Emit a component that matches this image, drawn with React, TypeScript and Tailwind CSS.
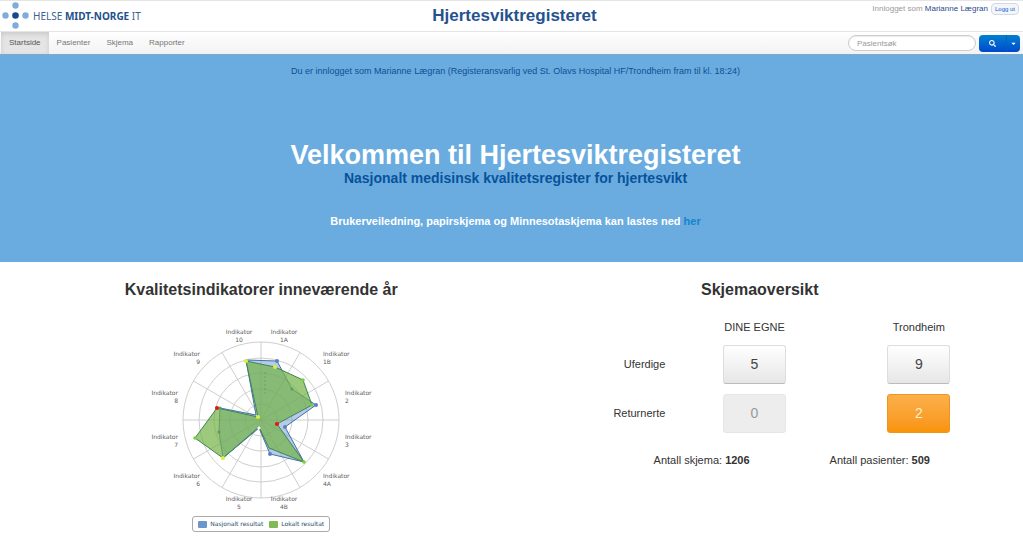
import { FaCaretDown, FaSearch } from "react-icons/fa";

type Point = [number, number];

const navItems = ["Startside", "Pasienter", "Skjema", "Rapporter"];

const rows = [
  { label: "Uferdige", own: 5, place: 9 },
  { label: "Returnerte", own: 0, place: 2, warn: true },
];

const national: Point[] = [
  [105, 38], [136, 39], [151, 67], [175, 83], [144, 105], [163, 140],
  [129, 132], [118, 106], [82, 136], [78, 110], [79, 86], [115, 93],
];

const local: Point[] = [
  [105, 39], [134, 45], [162, 58], [171, 83], [136, 102], [163, 140],
  [128, 126], [118, 105], [82, 136], [54, 116], [76, 86], [117, 95],
];

const chartLabels: { id: string; x: number; y: number; anchor: "start" | "middle" | "end" }[] = [
  { id: "1A", x: 143, y: 12, anchor: "middle" },
  { id: "1B", x: 182, y: 34, anchor: "start" },
  { id: "2", x: 204, y: 73, anchor: "start" },
  { id: "3", x: 204, y: 117, anchor: "start" },
  { id: "4A", x: 182, y: 156, anchor: "start" },
  { id: "4B", x: 143, y: 179, anchor: "middle" },
  { id: "5", x: 98, y: 179, anchor: "middle" },
  { id: "6", x: 59, y: 156, anchor: "end" },
  { id: "7", x: 37, y: 117, anchor: "end" },
  { id: "8", x: 37, y: 73, anchor: "end" },
  { id: "9", x: 59, y: 34, anchor: "end" },
  { id: "10", x: 98, y: 12, anchor: "middle" },
];

export default function App() {
  return (
    <div className="min-h-screen bg-white font-['Liberation_Sans',Arial,sans-serif] text-[#333]">
      <Header />
      <NavBar />
      <Hero />
      <main className="grid grid-cols-2 pl-3 pr-[14px] pt-4">
        <Indicators />
        <Overview />
      </main>
    </div>
  );
}

function Header() {
  return (
    <header className="grid h-8 grid-cols-[1fr_auto_1fr] items-center border-y border-[#e5e5e5]">
      <a href="#" className="flex items-center gap-1 font-['Noto_Sans',sans-serif] text-[10px] text-[#3a6191]">
        <Logo />
        <span>
          HELSE <b className="text-[#24508c]">MIDT-NORGE</b> IT
        </span>
      </a>
      <h1 className="pl-1.5 text-[17px] font-bold leading-5 text-[#25528f]">Hjertesviktregisteret</h1>
      <div className="flex items-center gap-[3px] self-start justify-self-end pr-1 pt-0.5 text-[8px] leading-3 text-[#999]">
        <span>
          Innlogget som <span className="text-[#2b4a90]">Marianne Lægran</span>
        </span>
        <button className="h-3 rounded-sm border border-[#d4d8e4] bg-[#f3f5fa] px-[3px] text-[6px] leading-none text-[#0b62c4]">
          Logg ut
        </button>
      </div>
    </header>
  );
}

function NavBar() {
  return (
    <nav className="flex h-[22px] items-stretch bg-linear-to-b from-white to-[#f2f2f2] pl-px pr-[3px] text-[8px] text-[#777]">
      {navItems.map((item, i) => (
        <a
          key={item}
          href="#"
          className={
            i === 0
              ? "flex items-center bg-[#e5e5e5] px-2 text-[#555] shadow-[inset_0_2px_5px_rgba(0,0,0,0.12)]"
              : "flex items-center px-2"
          }
        >
          {item}
        </a>
      ))}
      <form className="ml-auto flex items-center gap-[3px]">
        <input
          type="search"
          aria-label="Pasientsøk"
          placeholder="Pasientsøk"
          className="h-4 w-32 rounded-full border border-[#ccc] bg-white px-2 text-[8px] shadow-[inset_0_1px_1px_rgba(0,0,0,0.08)] placeholder:text-[#999]"
        />
        <div className="flex h-[17px] overflow-hidden rounded-sm bg-linear-to-b from-[#0580d0] to-[#0048cc] text-white">
          <button type="button" aria-label="Søk" className="grid w-7 place-items-center border-r border-[#0060c4]">
            <FaSearch className="size-[7px]" />
          </button>
          <button type="button" aria-label="Flere valg" className="grid w-[13px] place-items-center">
            <FaCaretDown className="size-[7px]" />
          </button>
        </div>
      </form>
    </nav>
  );
}

function Hero() {
  return (
    <section className="h-52 border-t border-[#7fa9c8] bg-[#6aacdf] pl-2 pt-2.5 text-center">
      <p className="text-[9px] leading-3 text-[#0d4f94]">
        Du er innlogget som Marianne Lægran (Registeransvarlig ved St. Olavs Hospital HF/Trondheim fram til kl. 18:24)
      </p>
      <h2 className="pt-[62px] text-[27px] font-bold leading-8 text-white">Velkommen til Hjertesviktregisteret</h2>
      <p className="text-[14px] font-bold leading-[14px] text-[#08529c]">
        Nasjonalt medisinsk kvalitetsregister for hjertesvikt
      </p>
      <p className="pt-7 text-[11px] font-bold leading-4 text-white">
        Brukerveiledning, papirskjema og Minnesotaskjema kan lastes ned{" "}
        <a href="#" className="text-[#1485cc]">her</a>
      </p>
    </section>
  );
}

function Indicators() {
  return (
    <section className="flex flex-col items-center">
      <h3 className="text-base font-bold leading-6">Kvalitetsindikatorer inneværende år</h3>
      <RadarChart />
      <ul className="mt-1 flex items-center gap-1.5 rounded-[3px] border border-[#aaa] px-[5px] py-0.5 font-['DejaVu_Sans',sans-serif] text-[6px] leading-[10px] text-[#274b6d]">
        <li className="flex items-center gap-[3px]">
          <span className="h-[7px] w-[9px] rounded-[1px] bg-[#6c97cb]" />
          Nasjonalt resultat
        </li>
        <li className="flex items-center gap-[3px]">
          <span className="h-[7px] w-[9px] rounded-[1px] bg-[#7fba55]" />
          Lokalt resultat
        </li>
      </ul>
    </section>
  );
}

function Overview() {
  return (
    <section>
      <h3 className="text-center text-base font-bold leading-6">Skjemaoversikt</h3>
      <div className="pr-2">
        <table className="mt-3 w-full table-fixed text-[11px]">
          <thead>
            <tr className="h-[26px]">
              <td className="w-[33%]" />
              <th scope="col" className="font-normal">DINE EGNE</th>
              <th scope="col" className="font-normal">Trondheim</th>
            </tr>
          </thead>
          <tbody>
            {rows.map((row) => (
              <tr key={row.label} className="h-[49px]">
                <th scope="row" className="pr-[7px] text-right font-normal">{row.label}</th>
                <td className="text-center">
                  <CountButton value={row.own} />
                </td>
                <td className="text-center">
                  <CountButton value={row.place} warn={row.warn} />
                </td>
              </tr>
            ))}
          </tbody>
        </table>
      </div>
      <div className="flex justify-center gap-20 pt-3.5 pl-16 text-[11px] leading-4">
        <span>
          Antall skjema: <b>1206</b>
        </span>
        <span>
          Antall pasienter: <b>509</b>
        </span>
      </div>
    </section>
  );
}

function CountButton({ value, warn }: { value: number; warn?: boolean }) {
  const look = warn
    ? "border-[#f0951c] bg-linear-to-b from-[#fbb04a] to-[#f89406] text-[#fff0d0]"
    : value === 0
      ? "border-[#e6e6e6] bg-[#ededed] text-[#999]"
      : "border-[#ddd] border-b-[#bbb] bg-linear-to-b from-white to-[#e6e6e6] text-[#444]";
  return (
    <button disabled={value === 0} className={`h-[39px] w-[63px] rounded-[3px] border align-middle text-[14px] ${look}`}>
      {value}
    </button>
  );
}

function Logo() {
  return (
    <svg viewBox="0 0 29 30" className="h-[30px] w-[29px]" aria-hidden>
      <g fill="#7fadd6">
        <circle cx="15.5" cy="4.5" r="3.2" />
        <circle cx="5.5" cy="14.5" r="3.2" />
        <circle cx="25.5" cy="14.5" r="3.2" />
        <circle cx="15.5" cy="24.5" r="3.2" />
      </g>
      <circle cx="15.5" cy="14.5" r="3.3" fill="#174a8c" />
    </svg>
  );
}

function RadarChart() {
  const spokes = Array.from({ length: 12 }, (_, i) => (i * Math.PI) / 6);
  return (
    <svg viewBox="0 0 240 190" className="mt-5 h-[190px] w-[240px] font-['DejaVu_Sans',sans-serif]" role="img" aria-label="Kvalitetsindikatorer">
      <g fill="none" stroke="#c8c8c8" strokeWidth="0.9">
        {[16, 31, 47, 62, 78].map((r) => (
          <circle key={r} cx="120" cy="98" r={r} />
        ))}
        {spokes.map((a) => (
          <line key={a} x1="120" y1="98" x2={120 + 78 * Math.sin(a)} y2={98 - 78 * Math.cos(a)} />
        ))}
      </g>
      <polygon points={national.join(" ")} fill="#6c97d2" fillOpacity="0.5" stroke="#4573a7" strokeWidth="1" />
      <polygon points={local.join(" ")} fill="#72b244" fillOpacity="0.7" stroke="#3f8558" strokeWidth="1" />
      {/* faint value axis */}
      <path d="M124 50v24" stroke="#5f9a66" strokeWidth="2" strokeDasharray="2 2" opacity="0.35" />
      <g fill="#5f7fc4">
        {[1, 3, 4, 6].map((i) => (
          <circle key={i} cx={national[i][0]} cy={national[i][1]} r="2" />
        ))}
      </g>
      <g fill="#5f9a66">
        {[2, 9, 10].map((i) => (
          <circle key={i} cx={national[i][0]} cy={national[i][1]} r="1.6" />
        ))}
      </g>
      {[0, 1, 8, 11].map((i) => (
        <circle key={i} cx={local[i][0]} cy={local[i][1]} r="2.1" fill="#d9f03c" />
      ))}
      {[2, 3, 5, 9].map((i) => (
        <circle key={i} cx={local[i][0]} cy={local[i][1]} r="1.8" fill="#76cf3e" />
      ))}
      {[4, 10].map((i) => (
        <circle key={i} cx={local[i][0]} cy={local[i][1]} r="2.1" fill="#e01a12" />
      ))}
      <circle cx={local[7][0]} cy={local[7][1] + 1} r="1.6" fill="#fff" />
      <g fontSize="6" fill="#606060">
        {chartLabels.map((l) => (
          <text key={l.id} x={l.x} y={l.y} textAnchor={l.anchor}>
            Indikator
            <tspan x={l.x} dy="8">{l.id}</tspan>
          </text>
        ))}
      </g>
    </svg>
  );
}
